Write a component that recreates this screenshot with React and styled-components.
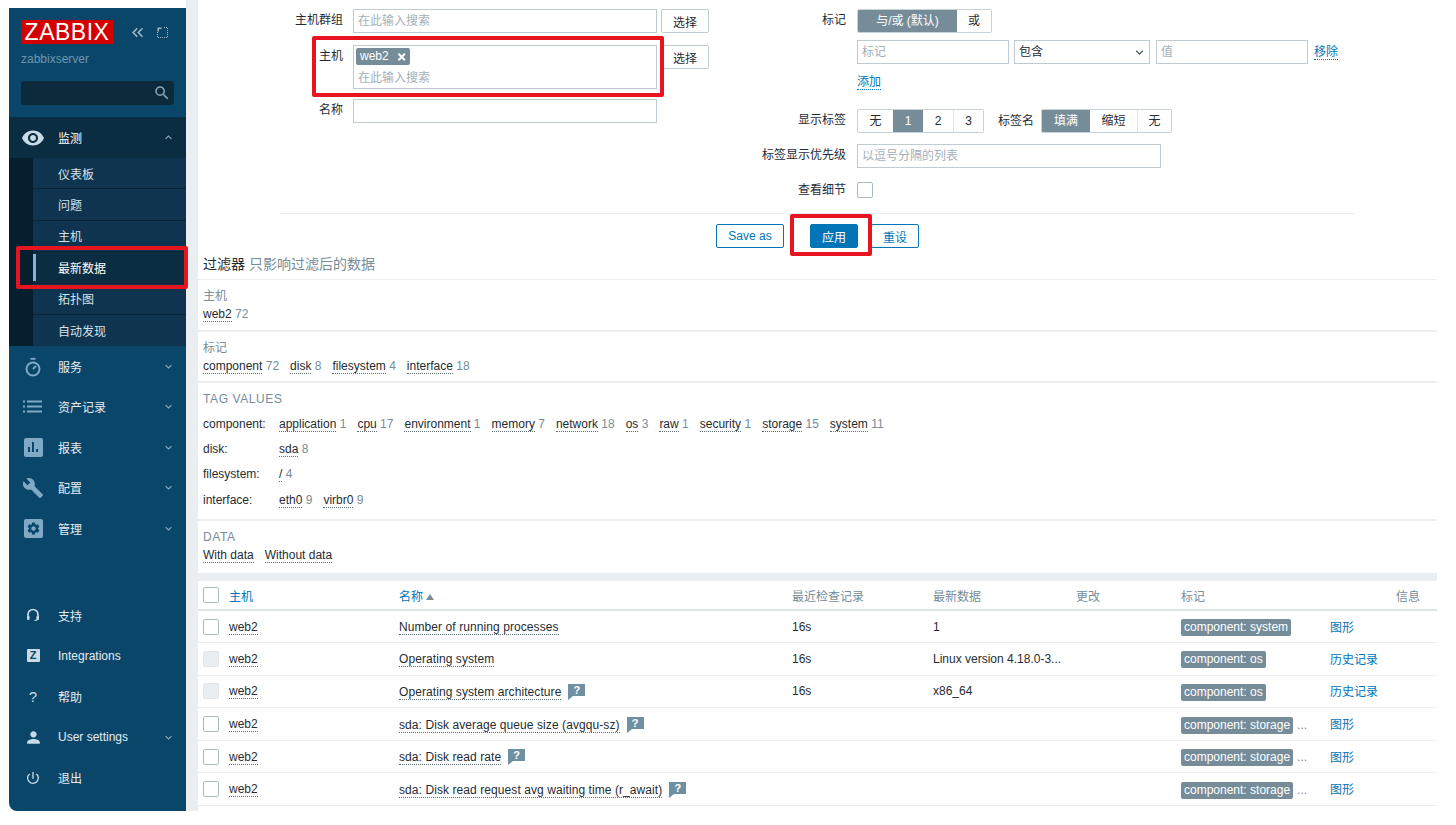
import styled, { createGlobalStyle } from "styled-components";
import {
  MdRemoveRedEye,
  MdBuild,
  MdSettings,
  MdPerson,
  MdPowerSettingsNew,
  MdSearch,
  MdKeyboardArrowDown,
  MdKeyboardArrowUp,
  MdKeyboardDoubleArrowLeft,
} from "react-icons/md";

const GlobalStyle = createGlobalStyle`
  html, body {
    margin: 0;
    padding: 0;
    background: #fff;
  }
  body {
    font-family: "Liberation Sans", "Noto Sans CJK SC", Arial, sans-serif;
    font-size: 12px;
    color: #1f2c33;
    overflow: hidden;
  }
  * { box-sizing: border-box; }
`;

const Page = styled.div`
  position: relative;
  width: 1456px;
  height: 825px;
  display: flex;
  align-items: flex-start;
  padding-left: 9px;
  overflow: hidden;
`;

const Sidebar = styled.aside`
  width: 177px;
  height: 803px;
  margin-top: 8px;
  flex-shrink: 0;
  display: flex;
  flex-direction: column;
  background: #0a466a;
  border-bottom-left-radius: 8px;
  color: #e6edf2;
`;

const Brand = styled.div`
  display: flex;
  align-items: center;
  padding: 12px 0 0 12px;
`;

const Logo = styled.div`
  width: 92px;
  height: 24px;
  background: #d40000;
  color: #fff;
  font-size: 23px;
  line-height: 25px;
  text-align: center;
  letter-spacing: 0.5px;
`;

const BrandIcons = styled.div`
  display: flex;
  align-items: center;
  margin-left: 15px;
  gap: 9px;
  color: #9fb6c6;
`;

const ServerName = styled.div`
  margin: 8px 0 0 12px;
  color: #6f96ae;
  height: 15px;
  line-height: 15px;
`;

const SearchBox = styled.div`
  margin: 14px 12px 0 12px;
  height: 24px;
  background: #0c2a3c;
  border-radius: 3px;
  display: flex;
  align-items: center;
  justify-content: flex-end;
  color: #8aa6b8;
  padding-right: 3px;
`;

const Nav = styled.nav`
  margin-top: 12px;
`;

const NavItem = styled.div`
  height: ${(p) => p.$h || 40.4}px;
  display: flex;
  align-items: center;
  padding-left: 12px;
  background: ${(p) => (p.$open ? "#0b2d42" : "transparent")};
  color: ${(p) => (p.$open ? "#fff" : "#e6edf2")};
`;

const NavIcon = styled.span`
  width: 24px;
  height: 20px;
  display: flex;
  align-items: center;
  justify-content: center;
  color: ${(p) => (p.$bright ? "#c9dbe6" : "#7fa9c4")};
  margin-right: 13px;
`;

const SquareIcon = styled.span`
  width: 19px;
  height: 19px;
  border-radius: 2px;
  background: #7fa9c4;
  color: #0a466a;
  display: flex;
  align-items: center;
  justify-content: center;
`;

const ZIcon = styled.span`
  width: 13px;
  height: 13px;
  border-radius: 1px;
  background: #c9dbe6;
  color: #0a466a;
  font-size: 11px;
  font-weight: 700;
  line-height: 13px;
  text-align: center;
`;

const HelpGlyph = styled.span`
  font-size: 15px;
  line-height: 1;
`;

const NavLabel = styled.span`
  flex: 1;
`;

const Caret = styled.span`
  width: 14px;
  margin-right: 11px;
  display: flex;
  justify-content: center;
  color: #8fb1c6;
`;

const SubMenu = styled.div`
  margin-left: 24px;
  background: #0f3450;
  box-shadow: -24px 0 0 #051f2e;
`;

const SubItem = styled.div`
  position: relative;
  height: 31.4px;
  display: flex;
  align-items: center;
  padding-left: 25px;
  border-bottom: 1px solid #0a2436;
  color: ${(p) => (p.$active ? "#fff" : "#d7e2ea")};
  background: ${(p) => (p.$active ? "#0b2d42" : "transparent")};
  &:last-child { border-bottom: 0; }
  ${(p) =>
    p.$active &&
    `&::before {
      content: "";
      position: absolute;
      left: 0;
      top: 2px;
      bottom: 2px;
      width: 3px;
      background: #7db8dc;
    }`}
`;

const FooterNav = styled.div`
  margin-top: auto;
  padding-bottom: 13px;
`;

const Content = styled.div`
  width: 1251px;
  height: 811px;
  flex-shrink: 0;
  background: #ebeef0;
  padding-left: 12px;
  display: flex;
  flex-direction: column;
`;

const FilterPanel = styled.section`
  background: #fff;
  height: 252px;
`;

const FilterColumns = styled.div`
  display: flex;
  height: 213px;
  padding-top: 9px;
`;

const LeftColumn = styled.div`
  width: 511px;
  flex-shrink: 0;
`;

const RightColumn = styled.div`
  flex: 1;
`;

const FieldRow = styled.div`
  display: grid;
  grid-template-columns: ${(p) => (p.$right ? "137px 1fr" : "145px 1fr")};
  column-gap: ${(p) => (p.$right ? 11 : 10)}px;
  margin-top: ${(p) => p.$mt || 0}px;
  min-height: 16px;
`;

const FieldLabel = styled.label`
  text-align: right;
  line-height: ${(p) => p.$lh || 23}px;
`;

const FieldControls = styled.div`
  display: flex;
  align-items: ${(p) => (p.$top ? "flex-start" : "center")};
  gap: ${(p) => p.$gap ?? 4}px;
`;

const TextBox = styled.div`
  width: ${(p) => p.$w}px;
  height: ${(p) => p.$h || 24}px;
  margin-left: ${(p) => p.$ml || 0}px;
  border: 1px solid #c0cbd1;
  padding: 0 4px;
  line-height: 22px;
  color: #a3b0b8;
  background: #fff;
  flex-shrink: 0;
`;

const SelectBox = styled(TextBox)`
  color: #1f2c33;
  display: flex;
  align-items: center;
  justify-content: space-between;
  padding-right: 2px;
`;

const Chip = styled.span`
  display: flex;
  width: 54px;
  align-items: center;
  height: 17px;
  margin: 2px 0 0 -2px;
  padding: 0 4px;
  gap: 8px;
  border-radius: 2px;
  background: #768d99;
  color: #fff;
  line-height: 17px;
`;

const MultiHint = styled.div`
  margin-top: 3px;
  line-height: 20px;
`;

const GhostButton = styled.button`
  height: 24px;
  width: ${(p) => p.$w}px;
  padding: 0;
  font: inherit;
  border: 1px solid #c0cbd1;
  border-radius: 2px;
  background: #fff;
  color: #1f2c33;
`;

const Segments = styled.div`
  display: flex;
  height: 24px;
  border: 1px solid #c8d2d8;
  border-radius: 2px;
  overflow: hidden;
`;

const Segment = styled.span`
  width: ${(p) => p.$w}px;
  line-height: 22px;
  text-align: center;
  white-space: nowrap;
  background: ${(p) => (p.$on ? "#768d99" : "#fff")};
  color: ${(p) => (p.$on ? "#fff" : "#1f2c33")};
  border-left: ${(p) => (p.$split ? "1px solid #dfe4e7" : "0")};
`;

const InlineLabel = styled.span`
  margin: 0 7px 0 14px;
  line-height: 24px;
`;

const DottedLink = styled.a`
  color: #0275b8;
  border-bottom: 1px dotted #0275b8;
  line-height: 14px;
  margin-left: ${(p) => p.$ml || 0}px;
`;

const Checkbox = styled.span`
  display: block;
  width: 16px;
  height: 16px;
  border: 1px solid #acbbc2;
  border-radius: 2px;
  background: ${(p) => (p.$disabled ? "#ebeef0" : "#fff")};
  border-color: ${(p) => (p.$disabled ? "#e3e7ea" : "#acbbc2")};
`;

const FormDivider = styled.hr`
  margin: 0 82px;
  border: 0;
  border-top: 1px solid #ebeef0;
`;

const ActionRow = styled.div`
  display: flex;
  padding: 10px 0 0 518px;
`;

const OutlineButton = styled.button`
  height: 24px;
  width: ${(p) => p.$w}px;
  margin-left: ${(p) => p.$ml || 0}px;
  padding: 0;
  font: inherit;
  border: 1px solid #0275b8;
  border-radius: 2px;
  background: ${(p) => (p.$primary ? "#0275b8" : "#fff")};
  color: ${(p) => (p.$primary ? "#fff" : "#0275b8")};
`;

const SubfilterTitle = styled.div`
  background: #fff;
  height: 28px;
  padding: 4px 5px 0;
  line-height: 16px;
  font-size: 14px;
  border-bottom: 1px solid #ebeef0;
`;

const Muted = styled.span`
  color: #768d99;
`;

const SubfilterBlock = styled.div`
  background: #fff;
  height: ${(p) => p.$h}px;
  padding: 9px 5px 0;
  border-bottom: ${(p) => (p.$last ? "0" : "2px solid #ebeef0")};
`;

const BlockTitle = styled.div`
  color: #768d99;
  line-height: 14px;
  margin-bottom: ${(p) => p.$mb || 3}px;
  letter-spacing: ${(p) => (p.$caps ? "0.6px" : 0)};
`;

const ValueRow = styled.div`
  display: flex;
  align-items: center;
  height: 25.3px;
`;

const PlainRow = styled.div`
  display: flex;
  align-items: center;
  height: 16px;
`;

const ValueKey = styled.span`
  width: 76px;
  flex-shrink: 0;
`;

const Value = styled.span`
  margin-right: 11px;
  white-space: nowrap;
`;

const Underlined = styled.span`
  color: #1f2c33;
  border-bottom: 1px dotted #5f6f78;
`;

const ItemName = styled(Underlined)`
  letter-spacing: 0.08px;
`;

const Count = styled.span`
  color: #768d99;
`;

const TableWrap = styled.div`
  margin-top: 8px;
  background: #fff;
  flex: 1;
`;

const DataTable = styled.table`
  width: 1239px;
  table-layout: fixed;
  border-collapse: collapse;
  background: #fff;
`;

const HeadCell = styled.th`
  height: 29px;
  padding: 0;
  font-weight: 400;
  text-align: left;
  color: ${(p) => (p.$link ? "#0275b8" : "#768d99")};
  border-bottom: 2px solid #dfe4e7;
`;

const InfoHead = styled.div`
  display: flex;
  justify-content: space-between;
  padding-right: 17px;
`;

const SortMark = styled.span`
  display: inline-block;
  margin-left: 3px;
  vertical-align: 1px;
  border-left: 4px solid transparent;
  border-right: 4px solid transparent;
  border-bottom: 6px solid #768d99;
`;

const Cell = styled.td`
  height: 32.6px;
  padding: 0;
  border-bottom: 1px solid #ebeef0;
  white-space: nowrap;
`;

const CheckCell = styled.div`
  padding-left: 5px;
`;

const HelpIcon = styled.span`
  position: relative;
  display: inline-block;
  width: 17px;
  height: 12px;
  margin-left: 7px;
  background: #6f8fa3;
  color: #fff;
  font-size: 11px;
  font-weight: 700;
  line-height: 12px;
  text-align: center;
  vertical-align: 2px;
  &::after {
    content: "";
    position: absolute;
    left: 0;
    top: 12px;
    border-top: 4px solid #6f8fa3;
    border-right: 5px solid transparent;
  }
`;

const TagChip = styled.span`
  display: inline-block;
  height: 17px;
  line-height: 17px;
  padding: 0 3px;
  border-radius: 2px;
  background: #768d99;
  color: #fff;
  vertical-align: -3px;
`;

const TagMore = styled.span`
  margin-left: 4px;
  color: #768d99;
  vertical-align: -3px;
`;

const TableLink = styled.a`
  color: #0275b8;
  display: inline-block;
  vertical-align: 1px;
`;

const RedBox = styled.div`
  position: absolute;
  left: ${(p) => p.$x}px;
  top: ${(p) => p.$y}px;
  width: ${(p) => p.$w}px;
  height: ${(p) => p.$h}px;
  border: 4px solid #e8141f;
  border-radius: 2px;
  pointer-events: none;
`;

const TimerIcon = () => (
  <svg width="16" height="20" viewBox="0 0 16 20" fill="none" stroke="currentColor">
    <circle cx="8" cy="12" r="6.5" strokeWidth="2" />
    <path d="M5.5 1.8h5" strokeWidth="1.8" />
    <path d="M8 12l3-3" strokeWidth="1.8" />
  </svg>
);

const ListIcon = () => (
  <svg width="20" height="13" viewBox="0 0 20 13" fill="currentColor">
    <rect x="0" y="0.5" width="2" height="2" />
    <rect x="0" y="5.5" width="2" height="2" />
    <rect x="0" y="10.5" width="2" height="2" />
    <rect x="4" y="0.5" width="15" height="2" />
    <rect x="4" y="5.5" width="15" height="2" />
    <rect x="4" y="10.5" width="15" height="2" />
  </svg>
);

const BarsIcon = () => (
  <svg width="12" height="12" viewBox="0 0 12 12" fill="currentColor">
    <rect x="1" y="6" width="2" height="5" />
    <rect x="5" y="1" width="2" height="10" />
    <rect x="9" y="8" width="2" height="3" />
  </svg>
);

const KioskIcon = () => (
  <svg width="13" height="13" viewBox="0 0 13 13" fill="none" stroke="currentColor">
    <path d="M8 1.5h3.5v10h-10V5" strokeDasharray="1 1" />
    <path d="M1.5 1.5h4v1.5h-2.5v2.5h-1.5z" fill="currentColor" stroke="none" />
  </svg>
);

const HeadsetIcon = () => (
  <svg width="14" height="15" viewBox="0 0 14 15" fill="none" stroke="currentColor">
    <path d="M2 9V6.5a5 5 0 0 1 10 0V9" strokeWidth="1.7" />
    <path d="M12 9.5c0 2-1.5 3-3.5 3" strokeWidth="1.2" />
    <rect x="1" y="8" width="2.6" height="4" rx="1" fill="currentColor" stroke="none" />
    <rect x="10.4" y="8" width="2.6" height="4" rx="1" fill="currentColor" stroke="none" />
  </svg>
);

const RemoveIcon = () => (
  <svg width="10" height="10" viewBox="0 0 10 10" fill="none" stroke="#fff" strokeWidth="2.2">
    <path d="M1.5 1.5l7 7M8.5 1.5l-7 7" />
  </svg>
);

const tagNames = [
  ["component", 72],
  ["disk", 8],
  ["filesystem", 4],
  ["interface", 18],
];

const tagValues = [
  {
    key: "component:",
    values: [
      ["application", 1],
      ["cpu", 17],
      ["environment", 1],
      ["memory", 7],
      ["network", 18],
      ["os", 3],
      ["raw", 1],
      ["security", 1],
      ["storage", 15],
      ["system", 11],
    ],
  },
  { key: "disk:", values: [["sda", 8]] },
  { key: "filesystem:", values: [["/", 4]] },
  { key: "interface:", values: [["eth0", 9], ["virbr0", 9]] },
];

const rows = [
  { name: "Number of running processes", check: "16s", last: "1", tag: "component: system", link: "图形" },
  { name: "Operating system", check: "16s", last: "Linux version 4.18.0-3...", tag: "component: os", link: "历史记录", disabled: true },
  { name: "Operating system architecture", help: true, check: "16s", last: "x86_64", tag: "component: os", link: "历史记录", disabled: true },
  { name: "sda: Disk average queue size (avgqu-sz)", help: true, tag: "component: storage", more: true, link: "图形" },
  { name: "sda: Disk read rate", help: true, tag: "component: storage", more: true, link: "图形" },
  { name: "sda: Disk read request avg waiting time (r_await)", help: true, tag: "component: storage", more: true, link: "图形" },
];

const menu = [
  { label: "服务", icon: <TimerIcon /> },
  { label: "资产记录", icon: <ListIcon /> },
  { label: "报表", icon: <SquareIcon><BarsIcon /></SquareIcon> },
  { label: "配置", icon: <MdBuild size={22} /> },
  { label: "管理", icon: <SquareIcon><MdSettings size={15} /></SquareIcon> },
];

const footerMenu = [
  { label: "支持", icon: <HeadsetIcon /> },
  { label: "Integrations", icon: <ZIcon>Z</ZIcon> },
  { label: "帮助", icon: <HelpGlyph>?</HelpGlyph> },
  { label: "User settings", icon: <MdPerson size={19} />, caret: true },
  { label: "退出", icon: <MdPowerSettingsNew size={16} /> },
];

const App = () => {
  return (
    <>
      <GlobalStyle />
      <Page>
        <Sidebar>
          <Brand>
            <Logo>ZABBIX</Logo>
            <BrandIcons>
              <MdKeyboardDoubleArrowLeft size={19} />
              <KioskIcon />
            </BrandIcons>
          </Brand>
          <ServerName>zabbixserver</ServerName>
          <SearchBox>
            <MdSearch size={18} />
          </SearchBox>
          <Nav>
            <NavItem $open $h={41}>
              <NavIcon $bright>
                <MdRemoveRedEye size={24} />
              </NavIcon>
              <NavLabel>监测</NavLabel>
              <Caret>
                <MdKeyboardArrowUp size={13} />
              </Caret>
            </NavItem>
            <SubMenu>
              <SubItem>仪表板</SubItem>
              <SubItem>问题</SubItem>
              <SubItem>主机</SubItem>
              <SubItem $active>最新数据</SubItem>
              <SubItem>拓扑图</SubItem>
              <SubItem>自动发现</SubItem>
            </SubMenu>
            {menu.map((item) => (
              <NavItem key={item.label}>
                <NavIcon>{item.icon}</NavIcon>
                <NavLabel>{item.label}</NavLabel>
                <Caret>
                  <MdKeyboardArrowDown size={13} />
                </Caret>
              </NavItem>
            ))}
          </Nav>
          <FooterNav>
            {footerMenu.map((item) => (
              <NavItem key={item.label} $h={40.6}>
                <NavIcon $bright>{item.icon}</NavIcon>
                <NavLabel>{item.label}</NavLabel>
                {item.caret && (
                  <Caret>
                    <MdKeyboardArrowDown size={13} />
                  </Caret>
                )}
              </NavItem>
            ))}
          </FooterNav>
        </Sidebar>

        <Content>
          <FilterPanel>
            <FilterColumns>
              <LeftColumn>
                <FieldRow>
                  <FieldLabel>主机群组</FieldLabel>
                  <FieldControls>
                    <TextBox $w={304}>在此输入搜索</TextBox>
                    <GhostButton $w={48}>选择</GhostButton>
                  </FieldControls>
                </FieldRow>
                <FieldRow $mt={12}>
                  <FieldLabel>主机</FieldLabel>
                  <FieldControls $top>
                    <TextBox $w={304} $h={44}>
                      <Chip>
                        web2
                        <RemoveIcon />
                      </Chip>
                      <MultiHint>在此输入搜索</MultiHint>
                    </TextBox>
                    <GhostButton $w={48}>选择</GhostButton>
                  </FieldControls>
                </FieldRow>
                <FieldRow $mt={10}>
                  <FieldLabel>名称</FieldLabel>
                  <FieldControls>
                    <TextBox $w={304} />
                  </FieldControls>
                </FieldRow>
              </LeftColumn>
              <RightColumn>
                <FieldRow $right>
                  <FieldLabel>标记</FieldLabel>
                  <FieldControls>
                    <Segments>
                      <Segment $w={99} $on>与/或 (默认)</Segment>
                      <Segment $w={34}>或</Segment>
                    </Segments>
                  </FieldControls>
                </FieldRow>
                <FieldRow $right $mt={7}>
                  <span />
                  <FieldControls $gap={5}>
                    <TextBox $w={152}>标记</TextBox>
                    <SelectBox $w={136}>
                      包含
                      <MdKeyboardArrowDown size={15} color="#4a5a63" />
                    </SelectBox>
                    <TextBox $w={152} $ml={1}>值</TextBox>
                    <DottedLink $ml={1}>移除</DottedLink>
                  </FieldControls>
                </FieldRow>
                <FieldRow $right $mt={10}>
                  <span />
                  <FieldControls>
                    <DottedLink>添加</DottedLink>
                  </FieldControls>
                </FieldRow>
                <FieldRow $right $mt={19}>
                  <FieldLabel>显示标签</FieldLabel>
                  <FieldControls $gap={0}>
                    <Segments>
                      <Segment $w={35}>无</Segment>
                      <Segment $w={30} $on>1</Segment>
                      <Segment $w={30}>2</Segment>
                      <Segment $w={30} $split>3</Segment>
                    </Segments>
                    <InlineLabel>标签名</InlineLabel>
                    <Segments>
                      <Segment $w={48} $on>填满</Segment>
                      <Segment $w={47}>缩短</Segment>
                      <Segment $w={34} $split>无</Segment>
                    </Segments>
                  </FieldControls>
                </FieldRow>
                <FieldRow $right $mt={11}>
                  <FieldLabel>标签显示优先级</FieldLabel>
                  <FieldControls>
                    <TextBox $w={304}>以逗号分隔的列表</TextBox>
                  </FieldControls>
                </FieldRow>
                <FieldRow $right $mt={14}>
                  <FieldLabel $lh={16}>查看细节</FieldLabel>
                  <FieldControls>
                    <Checkbox />
                  </FieldControls>
                </FieldRow>
              </RightColumn>
            </FilterColumns>
            <FormDivider />
            <ActionRow>
              <OutlineButton $w={68}>Save as</OutlineButton>
              <OutlineButton $w={48} $ml={26} $primary>应用</OutlineButton>
              <OutlineButton $w={48} $ml={13}>重设</OutlineButton>
            </ActionRow>
          </FilterPanel>

          <SubfilterTitle>
            过滤器 <Muted>只影响过滤后的数据</Muted>
          </SubfilterTitle>
          <SubfilterBlock $h={52}>
            <BlockTitle>主机</BlockTitle>
            <PlainRow>
              <Value>
                <Underlined>web2</Underlined> <Count>72</Count>
              </Value>
            </PlainRow>
          </SubfilterBlock>
          <SubfilterBlock $h={51}>
            <BlockTitle>标记</BlockTitle>
            <PlainRow>
              {tagNames.map(([name, count]) => (
                <Value key={name}>
                  <Underlined>{name}</Underlined> <Count>{count}</Count>
                </Value>
              ))}
            </PlainRow>
          </SubfilterBlock>
          <SubfilterBlock $h={138}>
            <BlockTitle $caps $mb={5}>TAG VALUES</BlockTitle>
            {tagValues.map((group) => (
              <ValueRow key={group.key}>
                <ValueKey>{group.key}</ValueKey>
                {group.values.map(([name, count]) => (
                  <Value key={name}>
                    <Underlined>{name}</Underlined> <Count>{count}</Count>
                  </Value>
                ))}
              </ValueRow>
            ))}
          </SubfilterBlock>
          <SubfilterBlock $h={52} $last>
            <BlockTitle $caps>DATA</BlockTitle>
            <PlainRow>
              <Value>
                <Underlined>With data</Underlined>
              </Value>
              <Value>
                <Underlined>Without data</Underlined>
              </Value>
            </PlainRow>
          </SubfilterBlock>

          <TableWrap>
            <DataTable>
              <colgroup>
                <col width="31" />
                <col width="170" />
                <col width="393" />
                <col width="141" />
                <col width="143" />
                <col width="105" />
                <col width="149" />
                <col width="107" />
              </colgroup>
              <thead>
                <tr>
                  <HeadCell>
                    <CheckCell>
                      <Checkbox />
                    </CheckCell>
                  </HeadCell>
                  <HeadCell $link>主机</HeadCell>
                  <HeadCell $link>
                    名称
                    <SortMark />
                  </HeadCell>
                  <HeadCell>最近检查记录</HeadCell>
                  <HeadCell>最新数据</HeadCell>
                  <HeadCell>更改</HeadCell>
                  <HeadCell colSpan={2}>
                    <InfoHead>
                      <span>标记</span>
                      <span>信息</span>
                    </InfoHead>
                  </HeadCell>
                </tr>
              </thead>
              <tbody>
                {rows.map((row) => (
                  <tr key={row.name}>
                    <Cell>
                      <CheckCell>
                        <Checkbox $disabled={row.disabled} />
                      </CheckCell>
                    </Cell>
                    <Cell>
                      <Underlined>web2</Underlined>
                    </Cell>
                    <Cell>
                      <ItemName>{row.name}</ItemName>
                      {row.help && <HelpIcon>?</HelpIcon>}
                    </Cell>
                    <Cell>{row.check}</Cell>
                    <Cell>{row.last}</Cell>
                    <Cell />
                    <Cell>
                      <TagChip>{row.tag}</TagChip>
                      {row.more && <TagMore>...</TagMore>}
                    </Cell>
                    <Cell>
                      <TableLink>{row.link}</TableLink>
                    </Cell>
                  </tr>
                ))}
              </tbody>
            </DataTable>
          </TableWrap>
        </Content>

        <RedBox $x={312} $y={36} $w={352} $h={61} />
        <RedBox $x={16} $y={246} $w={172} $h={43} />
        <RedBox $x={790} $y={214} $w={82} $h={42} />
      </Page>
    </>
  );
};

export default App;
